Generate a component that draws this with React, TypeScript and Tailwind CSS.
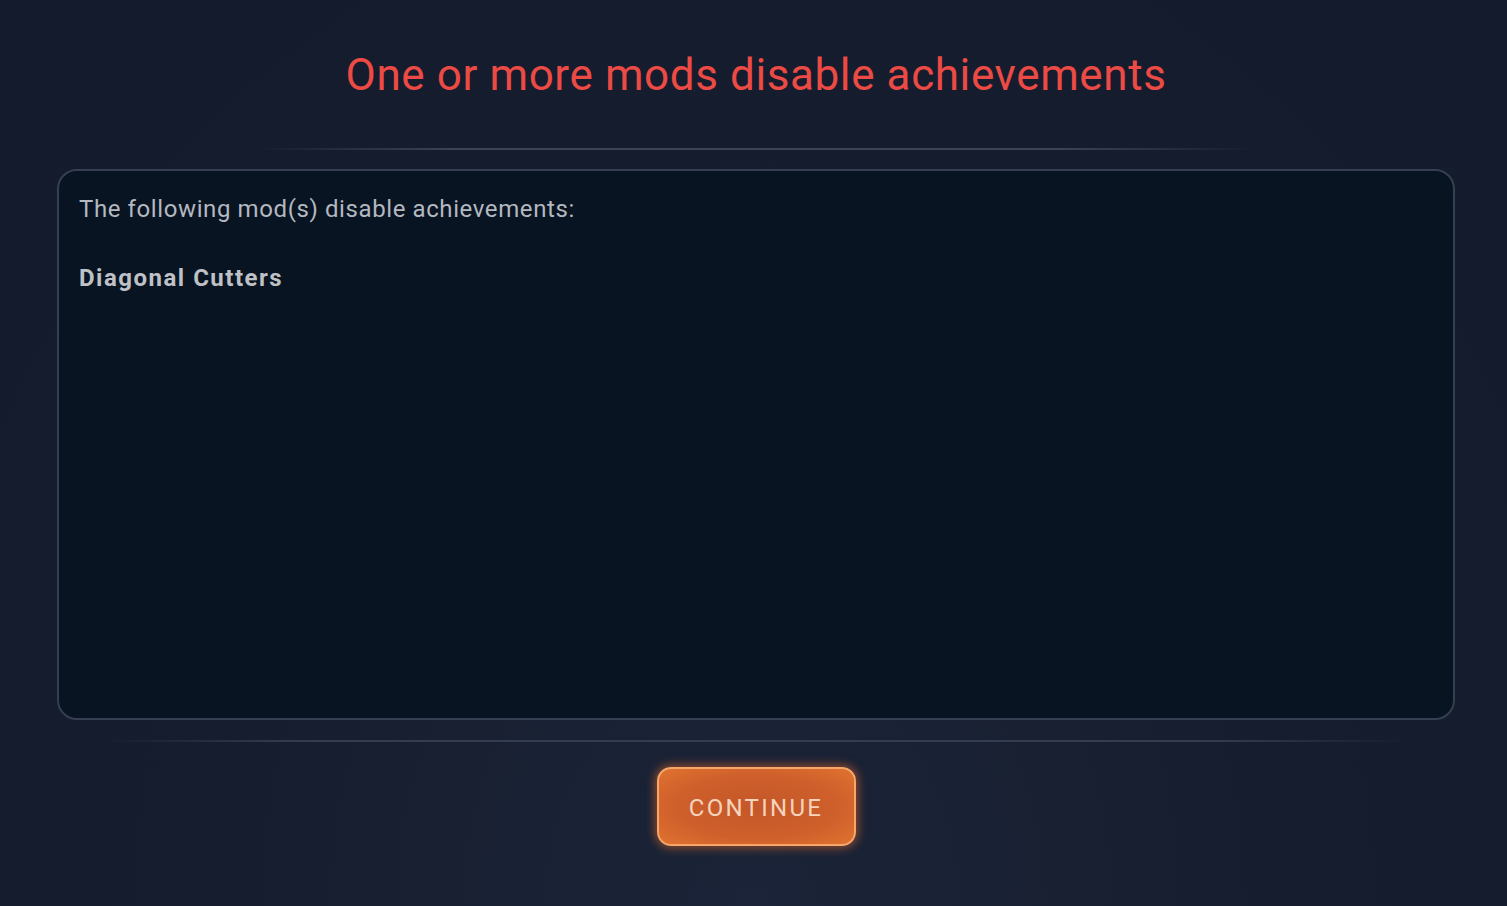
import React from "react";

export default function App() {
  return (
    <div
      className="w-[1507px] h-[906px] overflow-hidden pl-[5px] bg-[radial-gradient(ellipse_at_50%_100%,#1b2438_0%,#161d2e_50%,#131b2c_100%)] flex flex-col items-center"
      style={{ fontFamily: "Roboto, 'Liberation Sans', sans-serif" }}
    >
      <h1 className="mt-[47px] h-[56px] text-[44px] leading-[56px] text-[#ec4a44] tracking-[0.6px]">
        One or more mods disable achievements
      </h1>
      <div className="mt-[45px] h-[2px] w-[1000px] bg-[linear-gradient(90deg,transparent,#3b4456_20%,#3b4456_80%,transparent)]" />
      <div className="mt-[19px] w-[1398px] h-[551px] rounded-[20px] border-2 border-[#353f51] bg-[#081421] px-[20px] pt-[22px]">
        <p className="text-[24px] leading-[32px] text-[#b4b8c0] tracking-[0.6px]">
          The following mod(s) disable achievements:
        </p>
        <p className="mt-[37px] text-[24px] leading-[32px] font-bold text-[#bfc1c6] tracking-[1.5px]">
          Diagonal Cutters
        </p>
      </div>
      <div className="mt-[20px] h-[2px] w-[1300px] bg-[linear-gradient(90deg,transparent,#343d4f_15%,#343d4f_85%,transparent)]" />
      <button className="mt-[25px] w-[199px] h-[79px] pt-[3px] rounded-[14px] border-2 border-[#f6a66a] bg-[radial-gradient(ellipse_at_center,#c45729_0%,#cf602c_60%,#e0732f_100%)] shadow-[0_0_10px_2px_rgba(240,110,40,0.55)] text-[24px] tracking-[2.3px] text-[#f6d3bd]">
        CONTINUE
      </button>
    </div>
  );
}
